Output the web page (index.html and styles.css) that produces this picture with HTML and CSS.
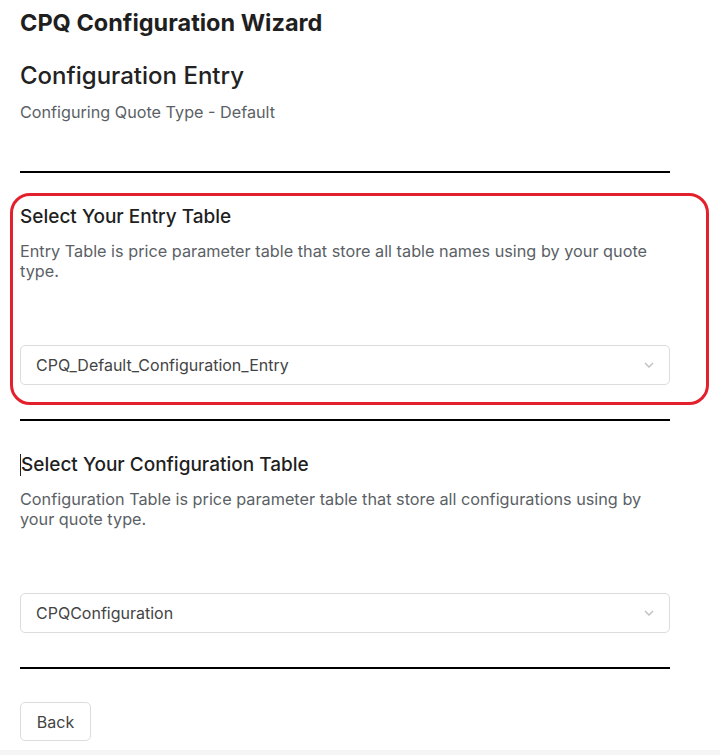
FILE: index.html
```html
<!DOCTYPE html>
<html lang="en">
<head>
<meta charset="utf-8">
<title>CPQ Configuration Wizard</title>
<link rel="stylesheet" href="styles.css">
</head>
<body>
<main class="wizard">
  <h1 class="wizard-title">CPQ Configuration Wizard</h1>
  <h2 class="page-title">Configuration Entry</h2>
  <p class="page-subtitle">Configuring Quote Type - Default</p>
  <hr class="divider divider-first">

  <section class="step">
    <h3 class="step-title">Select Your Entry Table</h3>
    <p class="step-desc">Entry Table is price parameter table that store all table names using by your quote type.</p>
    <div class="select">
      <span class="select-value">CPQ_Default_Configuration_Entry</span>
      <svg class="chevron" width="10" height="6" viewBox="0 0 10 6"><path d="M1 1l4 4 4-4" fill="none" stroke="#bdbdbd" stroke-width="1.3"/></svg>
    </div>
    <div class="highlight-ring"></div>
  </section>
  <hr class="divider">

  <section class="step">
    <h3 class="step-title"><span class="caret"></span>Select Your Configuration Table</h3>
    <p class="step-desc">Configuration Table is price parameter table that store all configurations using by your quote type.</p>
    <div class="select">
      <span class="select-value">CPQConfiguration</span>
      <svg class="chevron" width="10" height="6" viewBox="0 0 10 6"><path d="M1 1l4 4 4-4" fill="none" stroke="#bdbdbd" stroke-width="1.3"/></svg>
    </div>
  </section>
  <hr class="divider">

  <div class="actions">
    <button class="btn">Back</button>
  </div>
</main>
<footer class="footer-strip"></footer>
</body>
</html>
```
FILE: styles.css
```css
html, body {
  margin: 0;
  padding: 0;
  background: #fff;
}
body {
  font-family: Inter, "Noto Sans", sans-serif;
  color: #1f1f1f;
  height: 755px;
  overflow: hidden;
  position: relative;
}
.wizard {
  width: 650px;
  padding: 9px 0 0 20px;
}
.wizard-title {
  margin: 0;
  font-size: 23.5px;
  line-height: 28px;
  font-weight: 700;
  color: #1f1f1f;
}
.page-title {
  margin: 25px 0 0;
  font-size: 24px;
  line-height: 28px;
  font-weight: 500;
  color: #222;
}
.page-subtitle {
  margin: 12px 0 0;
  font-size: 16.2px;
  line-height: 20px;
  color: #5b5f66;
}
.divider {
  margin: 0;
  border: 0;
  height: 2px;
  background: #000;
}
.divider-first {
  margin-top: 49px;
}
.step {
  position: relative;
  padding: 32px 0 34px;
}
.step-title {
  margin: 0;
  font-size: 19px;
  line-height: 24px;
  font-weight: 500;
  color: #1f1f1f;
  display: flex;
  align-items: center;
}
.caret {
  width: 1px;
  height: 22px;
  background: #222;
}
.step-desc {
  margin: 12px 0 0;
  font-size: 16.25px;
  line-height: 20px;
  color: #5b5f66;
}
.select {
  margin-top: 64px;
  height: 38px;
  border: 1px solid #dcdcdc;
  border-radius: 5px;
  display: flex;
  align-items: center;
  justify-content: space-between;
  padding: 0 15px;
}
.select-value {
  font-size: 16px;
  color: #444;
}
.chevron {
  display: block;
}
.highlight-ring {
  position: absolute;
  left: -10px;
  right: -39px;
  top: 20px;
  bottom: 14px;
  border: 3px solid #e3202b;
  border-radius: 20px;
  pointer-events: none;
}
.actions {
  padding-top: 33px;
}
.btn {
  font-family: Inter, "Noto Sans", sans-serif;
  font-size: 16px;
  color: #444;
  background: #fff;
  border: 1px solid #dcdcdc;
  border-radius: 5px;
  width: 71px;
  height: 39px;
  padding: 0;
}
.footer-strip {
  position: absolute;
  left: 0;
  right: 0;
  bottom: 0;
  height: 5px;
  background: #f5f5f5;
}
```
